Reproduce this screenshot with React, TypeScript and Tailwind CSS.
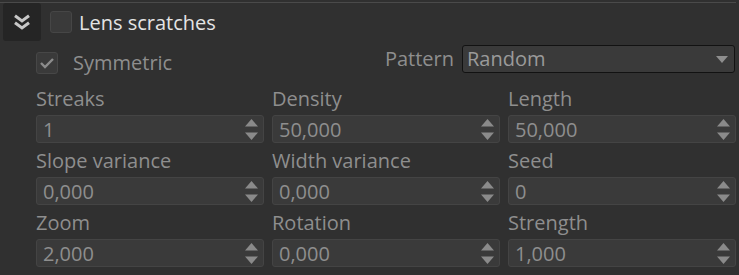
import React from "react";

const font = { fontFamily: '"Open Sans", "Noto Sans", "Liberation Sans", sans-serif' };

const fields = [
  { label: "Streaks", value: "1" },
  { label: "Density", value: "50,000" },
  { label: "Length", value: "50,000" },
  { label: "Slope variance", value: "0,000" },
  { label: "Width variance", value: "0,000" },
  { label: "Seed", value: "0" },
  { label: "Zoom", value: "2,000" },
  { label: "Rotation", value: "0,000" },
  { label: "Strength", value: "1,000" },
];

function Spinner() {
  return (
    <svg width="13" height="21" viewBox="0 0 13 21" className="shrink-0">
      <path d="M6.5 0 L13 7.5 L0 7.5 Z" fill="#8a8a8a" />
      <path d="M0 13.5 L13 13.5 L6.5 21 Z" fill="#8a8a8a" />
    </svg>
  );
}

function NumberField({ label, value }: { label: string; value: string }) {
  return (
    <div className="flex flex-col">
      <div className="h-[34px] pt-[8px] text-[20px] leading-[20px] text-[#8e8e8e]">{label}</div>
      <div className="h-[28px] flex items-center justify-between rounded-[3px] border border-[#444444] bg-[#3a3a3a] pl-[6px] pr-[5px]">
        <span className="text-[20px] leading-[20px] text-[#8e8e8e] pt-[2px]">{value}</span>
        <Spinner />
      </div>
    </div>
  );
}

export default function App() {
  return (
    <div className="w-[739px] h-[275px] bg-[#303030] pt-[2px] overflow-hidden" style={font}>
      <div className="h-[1px] mr-[3px] bg-[#4a4a4a]" />

      {/* header */}
      <div className="flex items-center h-[38px]">
        <div className="ml-[3px] w-[38px] h-[38px] rounded-[3px] bg-[#252525] flex items-center justify-center">
          <svg width="18" height="16" viewBox="0 0 18 16">
            <polyline points="2,1.8 9,7 16,1.8" fill="none" stroke="#c8c8c8" strokeWidth="3" />
            <polyline points="2,8.8 9,14 16,8.8" fill="none" stroke="#c8c8c8" strokeWidth="3" />
          </svg>
        </div>
        <div className="ml-[9px] w-[22px] h-[22px] rounded-[3px] border border-[#464646] bg-[#3a3a3a]" />
        <span className="ml-[7px] pt-[2px] text-[20px] leading-[20px] text-[#e4e4e4]">Lens scratches</span>
      </div>

      {/* symmetric / pattern */}
      <div className="flex items-start h-[28px] mt-[4px] mr-[4px]">
        <div className="ml-[36px] mt-[7px] flex items-center">
          <div className="w-[22px] h-[22px] rounded-[3px] border border-[#474747] bg-[#3a3a3a] flex items-center justify-center">
            <svg width="16" height="12" viewBox="0 0 16 12">
              <polyline points="2,6 6,10 14,2" fill="none" stroke="#8c8c8c" strokeWidth="2.4" />
            </svg>
          </div>
          <span className="ml-[15px] text-[20px] leading-[20px] text-[#8e8e8e]">Symmetric</span>
        </div>
        <div className="ml-auto flex items-center h-[28px]">
          <span className="text-[20px] leading-[20px] text-[#8e8e8e]">Pattern</span>
          <div className="ml-[8px] w-[273px] h-[28px] rounded-[3px] border border-[#121212] bg-[#3a3a3a] flex items-center justify-between pl-[4px] pr-[6px]">
            <span className="text-[20px] leading-[20px] text-[#9a9a9a]">Random</span>
            <svg width="12" height="7" viewBox="0 0 12 7">
              <path d="M0 0 L12 0 L6 7 Z" fill="#8e8e8e" />
            </svg>
          </div>
        </div>
      </div>

      {/* fields */}
      <div className="grid grid-cols-3 gap-x-[8px] w-[700px] ml-[36px] mt-[8px]">
        {fields.map((f) => (
          <NumberField key={f.label} label={f.label} value={f.value} />
        ))}
      </div>
    </div>
  );
}
